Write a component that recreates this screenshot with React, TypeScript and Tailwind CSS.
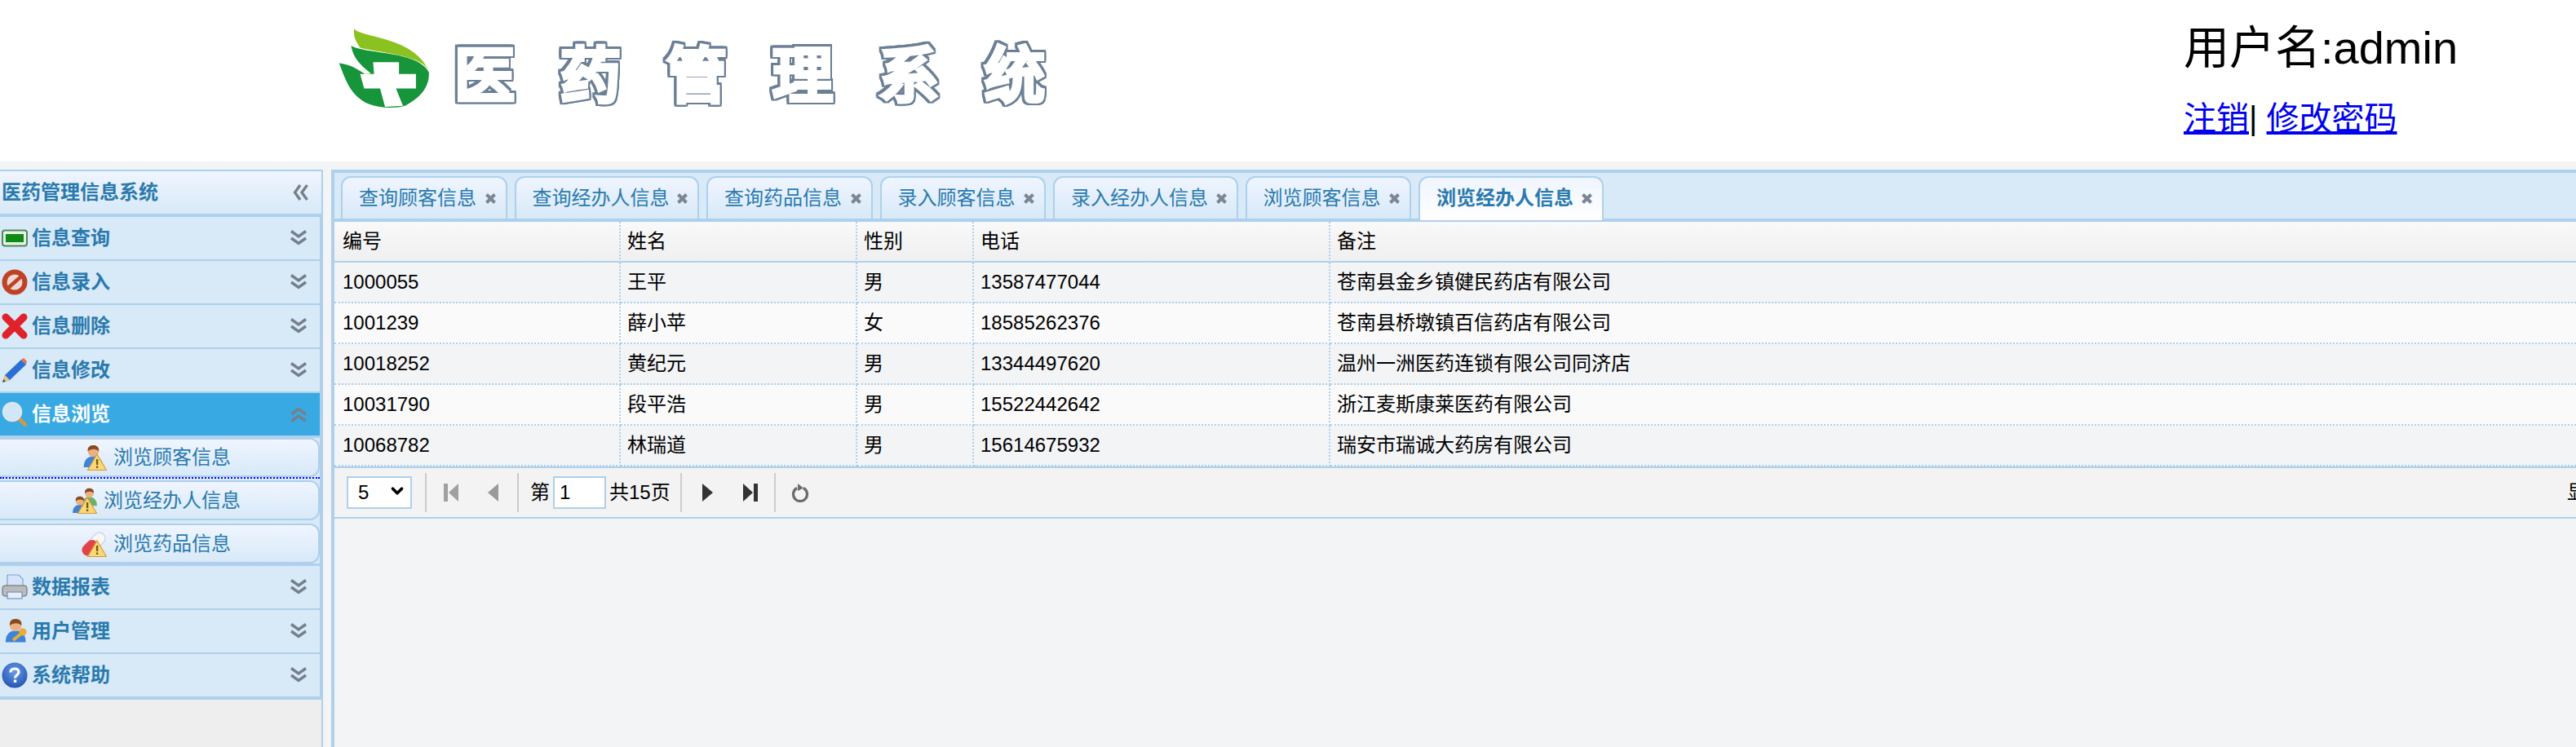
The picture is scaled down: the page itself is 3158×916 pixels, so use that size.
import { ChevronDown } from "lucide-react";
import type { ReactNode } from "react";

function Logo() {
  return (
    <svg width="113" height="97" viewBox="55 105 185 290" preserveAspectRatio="none" className="shrink-0" aria-hidden>
      <path d="M82 168C110 200 215 185 238 265C240 320 220 360 190 388C170 398 140 398 115 380C80 350 70 290 58 232C80 235 100 260 110 272L122 270C100 240 85 210 82 168Z" fill="#16953a" />
      <path d="M88 105C100 140 205 130 238 260C222 200 140 195 100 175C90 150 86 130 88 105Z" fill="#8cc220" />
      <path d="M126 228H178V272H212V325H172L186 388L150 392L140 325H108L100 272H128Z" fill="#fff" />
    </svg>
  );
}

function DoubleChevron({ dir = "down" }: { dir?: "down" | "up" | "left" }) {
  const rotate = dir === "up" ? "rotate-180" : dir === "left" ? "rotate-90" : "";
  return (
    <svg width="20" height="20" viewBox="0 0 20 20" className={`shrink-0 ${rotate}`} fill="none" stroke="#75808c" strokeWidth="3.4" aria-hidden>
      <path d="M1 1.5l9 6.5 9-6.5" />
      <path d="M1 10l9 6.5 9-6.5" />
    </svg>
  );
}

function WarnBadge() {
  return (
    <g>
      <path d="M20 12L31.5 31.5H8.5Z" fill="#f8d877" stroke="#d79a3a" strokeWidth="1.2" />
      <rect x="18.9" y="18" width="2.4" height="7" fill="#7a5a10" />
      <rect x="18.9" y="26.5" width="2.4" height="2.4" fill="#7a5a10" />
    </g>
  );
}

function PersonShape({ x = 0, y = 0, s = 1, shirt = "#3f83d6" }: { x?: number; y?: number; s?: number; shirt?: string }) {
  return (
    <g transform={`translate(${x} ${y}) scale(${s})`}>
      <path d="M3 31C3 20 9 16 16 16S29 20 29 31Z" fill={shirt} />
      <circle cx="16" cy="9.5" r="7.5" fill="#eab184" />
      <path d="M8.5 9.5C7.5 3 12 1 16 1S24.5 3 23.5 9.5C20 5.5 13 5.5 8.5 9.5Z" fill="#8a4a1c" />
    </g>
  );
}

const icons: Record<string, ReactNode> = {
  query: (
    <svg width="32" height="32" viewBox="0 0 32 32" aria-hidden>
      <rect x="1" y="6.5" width="30" height="19" rx="3" fill="#e8f2e8" stroke="#4f8a5a" strokeWidth="2" />
      <rect x="5" y="11" width="22" height="10" fill="#0f8a12" />
    </svg>
  ),
  add: (
    <svg width="32" height="32" viewBox="0 0 32 32" aria-hidden>
      <circle cx="16" cy="16" r="15.5" fill="#bf4226" />
      <circle cx="16" cy="16" r="9.5" fill="#ecd9d2" />
      <path d="M8 23L24 9" stroke="#bf4226" strokeWidth="4.5" />
    </svg>
  ),
  del: (
    <svg width="32" height="32" viewBox="0 0 32 32" aria-hidden>
      <path d="M5 5L27 27M27 5L5 27" stroke="#e0222a" strokeWidth="9" strokeLinecap="round" />
    </svg>
  ),
  edit: (
    <svg width="32" height="32" viewBox="0 0 32 32" aria-hidden>
      <path d="M1 31L4 22L24 3L30 9L10 28Z" fill="#2b6fd6" />
      <path d="M1 31L4 22L10 28Z" fill="#e8c98a" />
      <path d="M1 31L2.5 27L5 29.5Z" fill="#444" />
      <path d="M24 3L27 1L31 5L30 9Z" fill="#e8704a" />
    </svg>
  ),
  browse: (
    <svg width="32" height="32" viewBox="0 0 32 32" aria-hidden>
      <path d="M20 20L29 29" stroke="#d9973a" strokeWidth="4.5" strokeLinecap="round" />
      <circle cx="13" cy="13" r="11" fill="#cfe6fb" stroke="#dfe6ea" strokeWidth="2.5" />
    </svg>
  ),
  report: (
    <svg width="32" height="32" viewBox="0 0 32 32" aria-hidden>
      <path d="M7 1H21L26 6V18H7Z" fill="#d5e4fb" stroke="#7fa3d8" strokeWidth="1.2" />
      <rect x="1" y="14" width="30" height="13" rx="3" fill="#b9bbbd" stroke="#666" />
      <rect x="7" y="22" width="18" height="8" fill="#e8eef6" stroke="#6d94d0" strokeWidth="1.2" />
    </svg>
  ),
  user: (
    <svg width="32" height="32" viewBox="0 0 32 32" aria-hidden>
      <PersonShape x={2} y={0} s={0.95} />
      <path d="M14 27L24 19" stroke="#e6ae35" strokeWidth="4" />
      <circle cx="26" cy="17" r="4.5" fill="#e6ae35" />
    </svg>
  ),
  help: (
    <svg width="32" height="32" viewBox="0 0 32 32" aria-hidden>
      <defs>
        <radialGradient id="help-fill" cx="50%" cy="35%" r="70%">
          <stop offset="0" stopColor="#6b9be6" />
          <stop offset="1" stopColor="#1f4fae" />
        </radialGradient>
      </defs>
      <circle cx="16" cy="16" r="15.5" fill="url(#help-fill)" />
      <path d="M11 12.5C11 9.5 13.2 8 16 8S21 9.5 21 12.3C21 15.5 16.5 15.5 16.5 19.5" fill="none" stroke="#fff" strokeWidth="3.2" />
      <rect x="14.8" y="21.5" width="3.4" height="3.4" fill="#fff" />
    </svg>
  ),
  subCustomer: (
    <svg width="32" height="32" viewBox="0 0 32 32" aria-hidden>
      <PersonShape x={1} y={0} s={0.9} />
      <WarnBadge />
    </svg>
  ),
  subAgent: (
    <svg width="32" height="32" viewBox="0 0 32 32" aria-hidden>
      <PersonShape x={11} y={0} s={0.72} shirt="#6ab36a" />
      <PersonShape x={0} y={10} s={0.68} />
      <WarnBadge />
    </svg>
  ),
  subDrug: (
    <svg width="32" height="32" viewBox="0 0 32 32" aria-hidden>
      <path d="M9 23L23 9" stroke="#c9ccd0" strokeWidth="15" strokeLinecap="round" />
      <path d="M9 23L23 9" stroke="#f6f6f6" strokeWidth="13" strokeLinecap="round" />
      <path d="M8.5 23.5L14 18" stroke="#e2434a" strokeWidth="14" strokeLinecap="round" />
      <WarnBadge />
    </svg>
  ),
};

function NavRow({ icon, label, active }: { icon: string; label: string; active?: boolean }) {
  return (
    <div className={`flex h-[52px] items-center pl-[2px] pr-4 ${active ? "bg-[#38a9e3] text-white" : "bg-[#d8e9f8] text-[#2a7aae]"}`}>
      <span className="flex w-[37px] shrink-0">{icons[icon]}</span>
      <span className="text-2xl font-bold">{label}</span>
      <span className="ml-auto">
        <DoubleChevron dir={active ? "up" : "down"} />
      </span>
    </div>
  );
}

function SubItem({ icon, label, className }: { icon: string; label: string; className: string }) {
  return (
    <div className={`flex items-center justify-center gap-2 rounded-r-xl border-2 border-l-0 border-[#aed0ec] bg-gradient-to-b from-[#eff5ff] to-[#d8e9f8] pr-2 text-2xl text-[#2a7aae] ${className}`}>
      {icons[icon]}
      <span>{label}</span>
    </div>
  );
}

const tabs = [
  { label: "查询顾客信息", width: "w-[203.5px]" },
  { label: "查询经办人信息", width: "w-[226.5px]" },
  { label: "查询药品信息", width: "w-[203.5px]" },
  { label: "录入顾客信息", width: "w-[203.5px]" },
  { label: "录入经办人信息", width: "w-[226.5px]" },
  { label: "浏览顾客信息", width: "w-[203.5px]" },
  { label: "浏览经办人信息", width: "w-[226.5px]", active: true },
];

const rows = [
  ["1000055", "王平", "男", "13587477044", "苍南县金乡镇健民药店有限公司"],
  ["1001239", "薛小苹", "女", "18585262376", "苍南县桥墩镇百信药店有限公司"],
  ["10018252", "黄纪元", "男", "13344497620", "温州一洲医药连锁有限公司同济店"],
  ["10031790", "段平浩", "男", "15522442642", "浙江麦斯康莱医药有限公司"],
  ["10068782", "林瑞道", "男", "15614675932", "瑞安市瑞诚大药房有限公司"],
];

const headers = ["编号", "姓名", "性别", "电话", "备注"];

function Separator({ className }: { className: string }) {
  return <span className={`h-12 w-[2px] shrink-0 bg-[#cccccc] ${className}`} />;
}

export default function App() {
  return (
    <div className="h-[916px] w-[3158px] overflow-hidden bg-[#f3f4f6] font-['Liberation_Sans','Noto_Sans_CJK_SC',sans-serif] text-black">
      <header className="flex h-[198px] items-start bg-white">
        <div className="ml-[414px] mt-[35px]">
          <Logo />
        </div>
        <div className="ml-[30px] mt-[44px] whitespace-nowrap text-[74px] font-normal leading-[100px] tracking-[56px] text-white [-webkit-text-stroke:6px_#fff] [filter:drop-shadow(2.5px_0_0_#6b7f95)_drop-shadow(-2.5px_0_0_#6b7f95)_drop-shadow(0_2.5px_0_#6b7f95)_drop-shadow(0_-2.5px_0_#6b7f95)_blur(0.5px)]">
          医药管理系统
        </div>
        <div className="ml-auto w-[481px] shrink-0">
          <div className="mt-[27px] text-[56px] leading-[64px]">用户名:admin</div>
          <div className="mt-[31px] text-[40px] leading-[46px]">
            <a href="#" className="text-[#0000ee] underline">注销</a>
            <span>| </span>
            <a href="#" className="text-[#0000ee] underline">修改密码</a>
          </div>
        </div>
      </header>

      <div className="flex h-[718px] pt-[10px]">
        <aside className="flex w-[396px] shrink-0 flex-col border-t-2 border-r-2 border-[#aed0ec] bg-[#eeeeee]">
          <div className="flex h-[56px] shrink-0 items-center border-b-4 border-[#aed0ec] bg-gradient-to-b from-[#eff5ff] to-[#d8e9f8] pl-[2px] pr-4 text-2xl font-bold text-[#2a7aae]">
            <span>医药管理信息系统</span>
            <span className="ml-auto">
              <DoubleChevron dir="left" />
            </span>
          </div>
          <div className="flex flex-col gap-[2px] border-r-2 border-[#aed0ec] bg-[#aed0ec]">
            <NavRow icon="query" label="信息查询" />
            <NavRow icon="add" label="信息录入" />
            <NavRow icon="del" label="信息删除" />
            <NavRow icon="edit" label="信息修改" />
            <NavRow icon="browse" label="信息浏览" active />
          </div>
          <div className="flex flex-col border-y-[3px] border-r-2 border-[#aed0ec] bg-[#d8e9f8]">
            <SubItem icon="subCustomer" label="浏览顾客信息" className="h-12" />
            <div className="border-t-2 border-dotted border-[#0000ff]" />
            <SubItem icon="subAgent" label="浏览经办人信息" className="mt-[2px] h-[49px]" />
            <SubItem icon="subDrug" label="浏览药品信息" className="mt-1 h-[49px]" />
          </div>
          <div className="flex flex-col gap-[2px] border-b-4 border-r-2 border-[#aed0ec] bg-[#aed0ec]">
            <NavRow icon="report" label="数据报表" />
            <NavRow icon="user" label="用户管理" />
            <NavRow icon="help" label="系统帮助" />
          </div>
        </aside>

        <main className="ml-[10px] w-[2964px] shrink-0 border-l-4 border-[#aed0ec] text-2xl">
          <div className="flex h-[64px] items-end gap-[9px] border-y-4 border-[#aed0ec] bg-[#d8e9f8] pl-2">
            {tabs.map((t) => (
              <div
                key={t.label}
                className={`flex h-[52px] items-center justify-between rounded-t-xl border-2 border-b-0 border-[#aed0ec] pl-5 pr-[12px] text-[#2a7aae] ${t.width} ${
                  t.active ? "relative -mb-[2px] h-[54px] bg-gradient-to-b from-[#eff5ff] to-white pb-[2px] font-bold" : "bg-gradient-to-b from-[#eff5ff] to-[#d8e9f8]"
                }`}
              >
                <span className="whitespace-nowrap">{t.label}</span>
                <svg width="13" height="13" viewBox="0 0 13 13" className="shrink-0" stroke="#7d8693" strokeWidth="4" aria-hidden>
                  <path d="M1.5 1.5L11.5 11.5M11.5 1.5L1.5 11.5" />
                </svg>
              </div>
            ))}
          </div>

          <table className="w-full table-fixed border-separate border-spacing-0">
            <colgroup>
              <col className="w-[351px]" />
              <col className="w-[290px]" />
              <col className="w-[143px]" />
              <col className="w-[437px]" />
              <col />
            </colgroup>
            <thead>
              <tr className="bg-gradient-to-b from-[#f9f9f9] to-[#efefef]">
                {headers.map((h, i) => (
                  <th key={h} className={`h-[50px] border-b-2 border-[#aed0ec] pr-[10px] text-left font-normal ${i === 0 ? "pl-[10px]" : "pl-2"} ${i < 4 ? "border-r-2 border-r-[#aed0ec] [border-right-style:dotted]" : ""}`}>
                    {h}
                  </th>
                ))}
              </tr>
            </thead>
            <tbody>
              {rows.map((row, r) => (
                <tr key={row[0]} className={r % 2 === 0 ? "bg-[#f3f4f6]" : "bg-[#fafafa]"}>
                  {row.map((cell, i) => (
                    <td key={i} className={`h-[50px] border-b-2 border-dotted border-[#aed0ec] pr-[10px] ${i === 0 ? "pl-[10px]" : "pl-2"} ${i < 4 ? "border-r-2" : ""}`}>
                      {cell}
                    </td>
                  ))}
                </tr>
              ))}
            </tbody>
          </table>

          <div className="flex h-[64px] items-center border-y-2 border-[#aed0ec] bg-[#f3f3f3] pl-[15px]">
            <div className="relative h-10 w-20 shrink-0">
              <select defaultValue="5" className="h-full w-full appearance-none rounded-none border-2 border-[#aed0ec] bg-white pl-3 text-2xl">
                <option value="5">5</option>
                <option value="10">10</option>
              </select>
              <ChevronDown size={22} strokeWidth={4} className="pointer-events-none absolute right-[7px] top-[7px]" />
            </div>
            <Separator className="ml-4" />
            <svg width="18" height="22" viewBox="0 0 18 22" className="ml-[21px] shrink-0" fill="#a0a0a0" aria-hidden>
              <rect width="5" height="22" />
              <path d="M18 0V22L6 11Z" />
            </svg>
            <svg width="16" height="22" viewBox="0 0 16 22" className="ml-[35px] shrink-0" fill="#9a9a9a" aria-hidden>
              <path d="M14 0V22L1 11Z" />
            </svg>
            <Separator className="ml-[21px]" />
            <span className="ml-[14px] shrink-0">第</span>
            <input readOnly defaultValue="1" className="ml-1 h-10 w-[65px] shrink-0 rounded-none border-2 border-[#aed0ec] bg-white pl-[6px] text-2xl" />
            <span className="ml-1 shrink-0">共15页</span>
            <Separator className="ml-3" />
            <svg width="14" height="22" viewBox="0 0 14 22" className="ml-6 shrink-0" fill="#333" aria-hidden>
              <path d="M1 0V22L14 11Z" />
            </svg>
            <svg width="18" height="22" viewBox="0 0 18 22" className="ml-[37px] shrink-0" fill="#333" aria-hidden>
              <path d="M0 0V22L12 11Z" />
              <rect x="13" width="5" height="22" />
            </svg>
            <Separator className="ml-5" />
            <svg width="22" height="24" viewBox="0 0 22 24" className="ml-[19px] shrink-0" fill="none" aria-hidden>
              <path d="M7 6.5A8.5 8.5 0 1 0 15 6.5" stroke="#6f6a66" strokeWidth="3.2" />
              <path d="M8 1L15 6.5L8 10Z" fill="#6f6a66" />
            </svg>
            <span className="ml-auto whitespace-nowrap pr-[19px]">显示1到5,共75记录</span>
          </div>
        </main>
      </div>
    </div>
  );
}
